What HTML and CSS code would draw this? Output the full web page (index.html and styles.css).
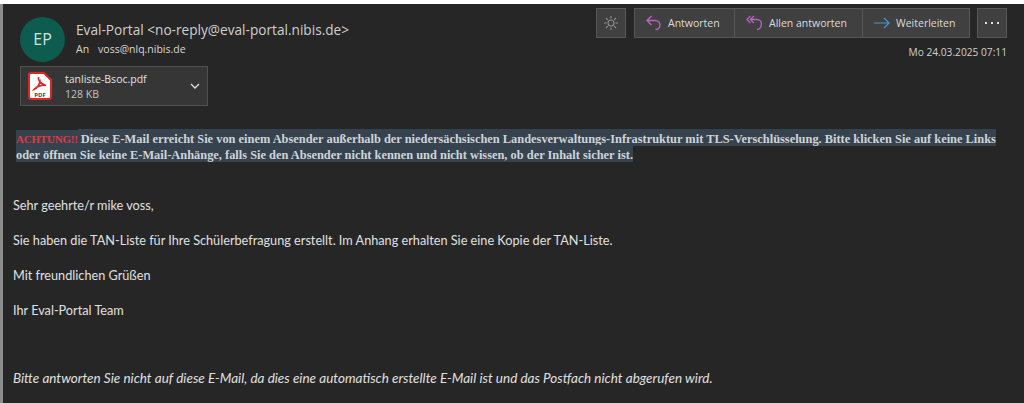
FILE: index.html
```html
<!DOCTYPE html>
<html>
<head>
  <meta charset="UTF-8">
  <title>Eval-Portal</title>
  <link rel="stylesheet" href="styles.css">
</head>
<body>
  <div class="mail">
    <div class="head">
      <div class="head-left">
        <div class="sender">
          <div class="avatar">EP</div>
          <div>
            <div class="from">Eval-Portal &lt;no-reply@eval-portal.nibis.de&gt;</div>
            <div class="to"><span class="to-label">An</span>voss@nlq.nibis.de</div>
          </div>
        </div>
        <div class="attachment">
          <svg class="pdf" width="24" height="28" viewBox="0 0 24 28">
            <path d="M3 1h13l7 7v17a2 2 0 0 1-2 2H3a2 2 0 0 1-2-2V3a2 2 0 0 1 2-2z" fill="#fff" stroke="#e0242b" stroke-width="2"/>
            <path d="M10.500 5c-1 3 1.500 6.500 7.500 8.500-3.500-.8-9 .5-12 4 3.500-1 6.500-6.500 6-10" fill="none" stroke="#e0242b" stroke-width="1.600"/>
            <text x="12" y="24.500" class="pdf-label">PDF</text>
          </svg>
          <div class="file">
            <div class="file-name">tanliste-Bsoc.pdf</div>
            <div class="file-size">128 KB</div>
          </div>
          <svg class="chevron" width="10" height="6" viewBox="0 0 10 6">
            <path d="M1 1l4 4 4-4" fill="none" stroke="#e0e0e0" stroke-width="1.300"/>
          </svg>
        </div>
      </div>
      <div class="head-right">
        <div class="toolbar">
          <button class="btn btn-icon">
            <svg width="16" height="16" viewBox="0 0 16 16" fill="none" stroke="#8f8f8f" stroke-width="1.100">
              <circle cx="8" cy="8" r="3"/>
              <path d="M8 1v2.500M8 12.500v2.500M1 8h2.500M12.500 8h2.500M3 3l1.800 1.800M11.200 11.200l1.800 1.800M3 13l1.800-1.800M11.200 4.800l1.800-1.800"/>
            </svg>
          </button>
          <div class="btn-group">
            <button class="btn btn-reply">
              <svg width="16" height="16" viewBox="0 0 16 16" fill="none" stroke="#b565c0" stroke-width="1.400">
                <path d="M5.500 1L1 5.500 5.500 10M1 5.500h8.500a4.500 4.500 0 0 1 4.500 4.500c0 2.500-2 4.500-4.500 4.500"/>
              </svg>
              Antworten
            </button>
            <button class="btn btn-all">
              <svg width="17" height="16" viewBox="0 0 17 16" fill="none" stroke="#b565c0" stroke-width="1.300">
                <path d="M4.500 1L1 4.500 4.500 8M8 1L4.500 4.500 8 8M4.500 4.500h6.500a4.500 4.500 0 0 1 4.500 4.500c0 2.800-2 5.500-4.500 5.500"/>
              </svg>
              Allen antworten
            </button>
            <button class="btn btn-forward">
              <svg width="16" height="12" viewBox="0 0 16 12" fill="none" stroke="#3f9ad6" stroke-width="1.200">
                <path d="M0 6h15M10 .8L15 6l-5 5.200"/>
              </svg>
              Weiterleiten
            </button>
          </div>
          <button class="btn btn-icon">
            <svg width="14" height="4" viewBox="0 0 14 4" fill="#e0e0e0">
              <rect x="0" y="1" width="2" height="2"/>
              <rect x="6" y="1" width="2" height="2"/>
              <rect x="12" y="1" width="2" height="2"/>
            </svg>
          </button>
        </div>
        <div class="date">Mo 24.03.2025 07:11</div>
      </div>
    </div>

    <div class="body">
      <p class="warning"><span class="mark alert">ACHTUNG!!</span><span class="mark"> Diese E-Mail erreicht Sie von einem Absender außerhalb der niedersächsischen Landesverwaltungs-Infrastruktur mit TLS-Verschlüsselung. Bitte klicken Sie auf keine Links</span><br><span class="mark">oder öffnen Sie keine E-Mail-Anhänge, falls Sie den Absender nicht kennen und nicht wissen, ob der Inhalt sicher ist.</span></p>
      <p>Sehr geehrte/r mike voss,</p>
      <p>Sie haben die TAN-Liste für Ihre Schülerbefragung erstellt. Im Anhang erhalten Sie eine Kopie der TAN-Liste.</p>
      <p>Mit freundlichen Grüßen</p>
      <p>Ihr Eval-Portal Team</p>
      <p class="note">Bitte antworten Sie nicht auf diese E-Mail, da dies eine automatisch erstellte E-Mail ist und das Postfach nicht abgerufen wird.</p>
    </div>
  </div>
</body>
</html>
```

FILE: styles.css
```css
* {
  box-sizing: border-box;
}
html, body {
  height: 100%;
}
body {
  margin: 0;
  padding-top: 4px;
  background-color: #fff;
  overflow: hidden;
  font-family: "Open Sans", "Noto Sans", sans-serif;
  color: #d6d6d6;
}
.mail {
  height: 399px;
  background-color: #262626;
  border-left: 3px solid #8c8c8c;
}
.head {
  display: flex;
  justify-content: space-between;
  height: 120px;
  padding: 4px 17px 0 17px;
}
.sender {
  display: flex;
  gap: 11px;
  padding-top: 9px;
}
.avatar {
  width: 45px;
  height: 45px;
  border-radius: 50%;
  background-color: #0e5c4f;
  color: #cfe3de;
  font-size: 16px;
  line-height: 45px;
  text-align: center;
}
.from {
  margin-top: 3px;
  font-size: 13.650px;
  line-height: 20px;
  color: #cfcfcf;
}
.to {
  font-size: 10.500px;
  line-height: 16px;
  margin-top: 1px;
}
.to-label {
  margin-right: 9px;
}
.attachment {
  display: flex;
  align-items: center;
  width: 188px;
  height: 40px;
  margin-top: 4px;
  padding: 0 7px 0 7px;
  background-color: #363636;
  border: 1px solid #505050;
}
.pdf-label {
  font-size: 6px;
  font-weight: 700;
  text-anchor: middle;
  fill: #444;
}
.file {
  flex: 1;
  margin-left: 13px;
  padding-top: 2px;
  font-size: 10.500px;
  line-height: 15px;
}
.file-name {
  color: #e2e2e2;
}
.file-size {
  color: #c4c4c4;
}
.head-right {
  display: flex;
  flex-direction: column;
  align-items: flex-end;
}
.toolbar {
  display: flex;
  gap: 7px;
}
.btn-group {
  display: flex;
  margin-left: 1px;
}
.btn {
  display: flex;
  align-items: center;
  gap: 6px;
  height: 30px;
  padding: 0 0 0 11px;
  background-color: #404040;
  border: 1px solid #575757;
  color: #dcdcdc;
  font-family: inherit;
  font-size: 10.500px;
}
.btn-reply {
  width: 101px;
}
.btn-all {
  width: 128px;
}
.btn-forward {
  width: 107px;
}
.btn-group .btn + .btn {
  border-left: 0;
}
.btn-icon {
  justify-content: center;
  width: 30px;
  padding: 0;
}
.date {
  margin-top: 6px;
  font-size: 10.200px;
  line-height: 16px;
  color: #d0d0d0;
}
.body {
  padding: 8px 0 0 10px;
  font-family: Lato, sans-serif;
  font-size: 12.700px;
  line-height: 16px;
  color: #e0e0e0;
}
.body p {
  margin: 0 0 19px;
}
.body .warning {
  width: 1000px;
  margin-bottom: 34px;
  padding-left: 3px;
  font-family: "Liberation Serif", serif;
  font-weight: 700;
  font-size: 12.400px;
  line-height: 15.500px;
  color: #cfd3d8;
}
.mark {
  padding-top: 3px;
  background-color: #36434f;
}
.alert {
  font-size: 11px;
  letter-spacing: -.2px;
  color: #e0393e;
}
.body .note {
  margin-top: 52px;
  font-size: 13.500px;
  font-style: italic;
}
```
